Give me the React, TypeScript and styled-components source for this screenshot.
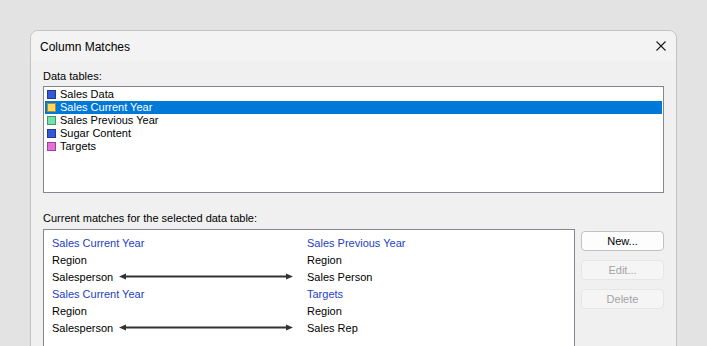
import React from "react";
import styled, { createGlobalStyle } from "styled-components";

const Global = createGlobalStyle`
  html, body { margin: 0; padding: 0; background: #e3e3e3; }
  body { font-family: "Liberation Sans", Arial, sans-serif; font-size: 11px; color: #000; }
  #root { width: 707px; height: 346px; overflow: hidden; }
`;

const Page = styled.div`
  padding: 30px 0 0 30px;
`;

const Dialog = styled.div`
  width: 647px;
  height: 340px;
  box-sizing: border-box;
  border: 1px solid #c2c2c2;
  border-radius: 8px 8px 0 0;
  background: #f0f0f0;
  overflow: hidden;
`;

const TitleBar = styled.div`
  height: 30px;
  background: #f3f3f3;
  display: flex;
  align-items: center;
  justify-content: space-between;
  padding: 0 10px 0 9px;
`;

const Title = styled.div`
  font-size: 12px;
  line-height: 14px;
  padding-top: 1px;
`;

const CloseBtn = styled.div`
  width: 10px;
  height: 10px;
  display: flex;
`;

const Body = styled.div`
  padding: 9px 12px 0 12px;
`;

const Label = styled.div<{ $gap: number }>`
  line-height: 13px;
  margin-bottom: ${(p) => p.$gap}px;
`;

const ListBox = styled.div`
  height: 107px;
  box-sizing: border-box;
  border: 1px solid #828790;
  background: #fff;
  padding: 1px;
  margin-bottom: 19px;
`;

const ListRow = styled.div<{ $selected?: boolean }>`
  height: 13px;
  display: flex;
  align-items: center;
  line-height: 13px;
  background: ${(p) => (p.$selected ? "#0078d7" : "transparent")};
  color: ${(p) => (p.$selected ? "#fff" : "#000")};
`;

const Swatch = styled.span<{ $color: string }>`
  width: 9px;
  height: 9px;
  box-sizing: border-box;
  margin: 0 4px 0 2px;
  background: ${(p) => p.$color};
  border: 1px solid rgba(0, 0, 0, 0.35);
  flex: none;
`;

const BottomRow = styled.div`
  display: flex;
  gap: 6px;
`;

const MatchBox = styled.div`
  width: 533px;
  height: 130px;
  box-sizing: border-box;
  border: 1px solid #828790;
  border-bottom: none;
  background: #fff;
  padding: 4px 0 0 8px;
  display: grid;
  grid-template-columns: 67px 188px 1fr;
  grid-auto-rows: 17px;
  align-items: center;
`;

const HeaderCell = styled.div<{ $span?: number }>`
  color: #2341c2;
  grid-column: span ${(p) => p.$span ?? 1};
  white-space: nowrap;
`;

const Cell = styled.div<{ $span?: number }>`
  grid-column: span ${(p) => p.$span ?? 1};
  white-space: nowrap;
`;

const ArrowCell = styled.div`
  display: flex;
  align-items: center;
  height: 17px;
`;

const ButtonCol = styled.div`
  display: flex;
  flex-direction: column;
  gap: 9px;
  padding-top: 2px;
`;

const Button = styled.div<{ $disabled?: boolean }>`
  width: 83px;
  height: 20px;
  box-sizing: border-box;
  border-radius: 4px;
  border: 1px solid ${(p) => (p.$disabled ? "#e6e6e6" : "#c2c2c2")};
  background: ${(p) => (p.$disabled ? "#f5f5f5" : "#fdfdfd")};
  color: ${(p) => (p.$disabled ? "#a3a3a3" : "#000")};
  display: flex;
  align-items: center;
  justify-content: center;
  line-height: 13px;
`;

const Arrow = () => (
  <svg width="174" height="7" viewBox="0 0 174 7">
    <path d="M0 3.5 L7 0.5 L7 6.5 Z" fill="#333" />
    <path d="M174 3.5 L167 0.5 L167 6.5 Z" fill="#333" />
    <rect x="5" y="2.5" width="164" height="2" fill="#333" />
  </svg>
);

const tables = [
  { name: "Sales Data", color: "#3558d8" },
  { name: "Sales Current Year", color: "#ffd95c", selected: true },
  { name: "Sales Previous Year", color: "#70e3a8" },
  { name: "Sugar Content", color: "#3558d8" },
  { name: "Targets", color: "#e86fd9" },
];

const matches = [
  { left: "Sales Current Year", right: "Sales Previous Year", lc: "Region", rc: "Region", ls: "Salesperson", rs: "Sales Person" },
  { left: "Sales Current Year", right: "Targets", lc: "Region", rc: "Region", ls: "Salesperson", rs: "Sales Rep" },
];

export default function App() {
  return (
    <>
      <Global />
      <Page>
        <Dialog>
          <TitleBar>
            <Title>Column Matches</Title>
            <CloseBtn>
              <svg width="10" height="10" viewBox="0 0 10 10">
                <path d="M0.5 0.5 L9.5 9.5 M9.5 0.5 L0.5 9.5" stroke="#1a1a1a" strokeWidth="1.1" />
              </svg>
            </CloseBtn>
          </TitleBar>
          <Body>
            <Label $gap={3}>Data tables:</Label>
            <ListBox>
              {tables.map((t) => (
                <ListRow key={t.name} $selected={t.selected}>
                  <Swatch $color={t.color} />
                  {t.name}
                </ListRow>
              ))}
            </ListBox>
            <Label $gap={4}>Current matches for the selected data table:</Label>
            <BottomRow>
              <MatchBox>
                {matches.map((m, i) => (
                  <React.Fragment key={i}>
                    <HeaderCell $span={2}>{m.left}</HeaderCell>
                    <HeaderCell>{m.right}</HeaderCell>
                    <Cell $span={2}>{m.lc}</Cell>
                    <Cell>{m.rc}</Cell>
                    <Cell>{m.ls}</Cell>
                    <ArrowCell>
                      <Arrow />
                    </ArrowCell>
                    <Cell>{m.rs}</Cell>
                  </React.Fragment>
                ))}
              </MatchBox>
              <ButtonCol>
                <Button>New...</Button>
                <Button $disabled>Edit...</Button>
                <Button $disabled>Delete</Button>
              </ButtonCol>
            </BottomRow>
          </Body>
        </Dialog>
      </Page>
    </>
  );
}
